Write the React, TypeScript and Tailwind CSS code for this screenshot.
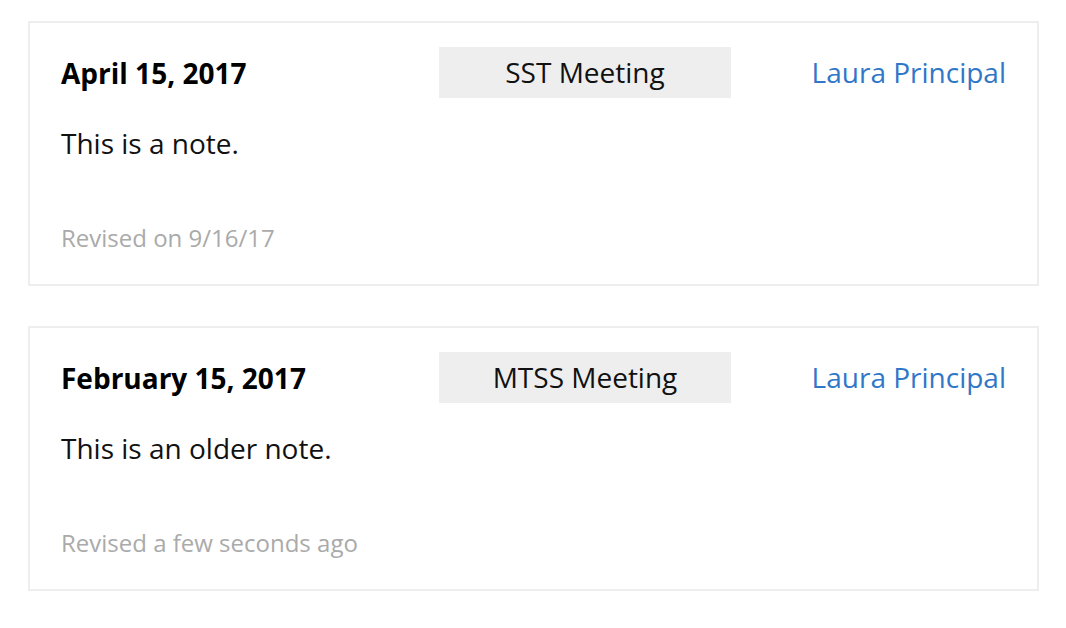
import React from 'react';

interface Note {
  date: string;
  meeting: string;
  author: string;
  body: string;
  revised: string;
}

const NOTES: Note[] = [
  {
    date: 'April 15, 2017',
    meeting: 'SST Meeting',
    author: 'Laura Principal',
    body: 'This is a note.',
    revised: 'Revised on 9/16/17',
  },
  {
    date: 'February 15, 2017',
    meeting: 'MTSS Meeting',
    author: 'Laura Principal',
    body: 'This is an older note.',
    revised: 'Revised a few seconds ago',
  },
];

const NoteCard: React.FC<{ note: Note }> = ({ note }) => (
  <div className="border-2 border-[#eeeeee] bg-white px-[31px] pt-[24px] pb-[28px]">
    {/* Header row */}
    <div className="flex items-center">
      <div className="w-[378px] text-[28px] font-bold text-black">{note.date}</div>
      <div className="flex h-[51px] w-[292px] items-center justify-center bg-[#eeeeee] pb-px text-[28px] text-[#111]">
        {note.meeting}
      </div>
      <a href="#" className="flex-1 pb-px text-right text-[28px] text-[#3177c8]">
        {note.author}
      </a>
    </div>
    <p className="mt-[24px] text-[28px] leading-[42px] text-[#111]">{note.body}</p>
    <p className="mt-[56px] text-[24px] leading-[36px] text-[#aaaaaa]">{note.revised}</p>
  </div>
);

export default function App() {
  return (
    <div
      className="min-h-screen bg-white pl-[28px] pr-[27px] pt-[21px]"
      style={{ fontFamily: '"Open Sans", "Noto Sans", sans-serif' }}
    >
      <div className="flex flex-col gap-[40px]">
        {NOTES.map((n) => (
          <NoteCard key={n.date} note={n} />
        ))}
      </div>
    </div>
  );
}
